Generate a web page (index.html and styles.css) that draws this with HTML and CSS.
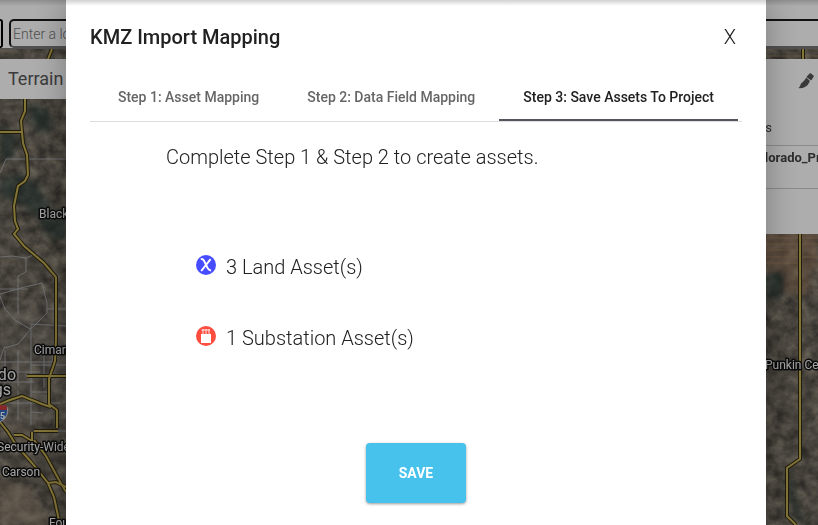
FILE: index.html
```html
<!DOCTYPE html>
<html lang="en">
<head>
    <meta charset="UTF-8">
    <title>KMZ Import Mapping</title>
    <link rel="stylesheet" href="styles.css">
</head>
<body>
    <div class="app">
        <header class="topbar">
            <button class="topbar-btn" aria-label="Menu"></button>
            <input type="text" class="search" placeholder="Enter a location" aria-label="Location">
        </header>

        <main class="map">
            <svg class="map-canvas" viewBox="0 49 818 476" preserveAspectRatio="xMidYMid slice">
                <defs>
                    <filter id="ground" x="0" y="0" width="100%" height="100%" color-interpolation-filters="sRGB">
                        <feTurbulence type="fractalNoise" baseFrequency="0.08 0.09" numOctaves="5" seed="8"/>
                        <feColorMatrix values="0.46 0.12 0 0 0.13  0.43 0.12 0 0 0.12  0.37 0.1 0 0 0.12  0 0 0 0 1"/>
                    </filter>
                    <filter id="soft" x="-30%" y="-30%" width="160%" height="160%">
                        <feGaussianBlur stdDeviation="3"/>
                    </filter>
                </defs>
                <rect y="49" width="818" height="476" filter="url(#ground)"/>

                <!-- forest and fields -->
                <g filter="url(#soft)">
                    <path class="forest" d="M28 102l20 8 6 16-10 8-12-8zM0 178l24-3 16 12 12 24 16 8v22l-20-4-10-20-18-14-20-6z"/>
                    <path class="forest" d="M0 125l16 12-2 20-14 4z"/>
                    <path class="city" d="M0 200l14 8 4 30-18 20zM0 310l70-8v115L0 430z"/>
                    <path class="sand" d="M14 425l18 4-4 24-14-6zM0 480l30 8 20 37H0z"/>
                    <path class="field" d="M760 228h58v42h-58zM786 270h24v24h-24z"/>
                    <path class="forest" d="M765 272h20v26h-20zM790 470l8 40 12 15-14-8-10-30z"/>
                </g>
                <path class="rows" d="M766 238h52M766 244h52M766 250h34M766 257h52M766 263h34M766 49h52M766 56h52"/>

                <g class="street">
                    <path d="M0 173l6-14h60"/>
                    <path d="M0 257l12-1 14 2 12-5M26 258v14l-8 4v38M0 289h28M0 294l25-7 17-4 5 20v10l-12 12-5 4-15-9-10-11-5-13M30 330l-12 14-14 4-4 12M30 324l36 2M47 309h19M31 325v100"/>
                    <path d="M5 350v34M18 350v36M0 362h52M0 372h40M0 382h34M31 392h20M31 412l12 1M0 403h60M18 390v30M44 350v38M53 350v30"/>
                    <path d="M56 431h10M31 365h35"/>
                </g>
                <g class="road-edge">
                    <path d="M52 49l-4 10M25 99v12l-4 10 2 22 4 12 1 20-3 6-7 5-4 20 1 15 3 8-4 5 10 12 20 17 12 14v62l-1 22-6 18v25l8 6v18"/>
                    <path d="M0 132h22M27 376h39M0 404l10-4 12-4 10 4 10 4 9 3"/>
                    <path d="M0 422l8 10 8 13 16 18 16 20 6 14 6 28M34 431h24M32 432v9l-10-6h-8M34 440l12 16 12 22 8 14M48 483l8-1 10 5"/>
                    <path d="M803 49v12l-3 173v225l-13 9v48l9 9"/>
                </g>
                <g class="road">
                    <path d="M52 49l-4 10M25 99v12l-4 10 2 22 4 12 1 20-3 6-7 5-4 20 1 15 3 8-4 5 10 12 20 17 12 14v62l-1 22-6 18v25l8 6v18"/>
                    <path d="M0 132h22M27 376h39M0 404l10-4 12-4 10 4 10 4 9 3"/>
                    <path d="M0 422l8 10 8 13 16 18 16 20 6 14 6 28M34 431h24M32 432v9l-10-6h-8M34 440l12 16 12 22 8 14M48 483l8-1 10 5"/>
                    <path d="M803 49v12l-3 173v225l-13 9v48l9 9"/>
                </g>

                <!-- interstate shield -->
                <path d="M-8 407q7-2 15 0 3 9-7 15-9-5-8-15z" fill="#2f65bd" stroke="#d8d8d8"/>
                <path d="M-7 406q7-2 14 0v4H-7z" fill="#c93a3e"/>
                <text x="0" y="419" class="shield">5</text>

                <g class="place">
                    <text x="39" y="218">Black Forest</text>
                    <text x="34" y="354">Cimarron Hills</text>
                    <text x="-3" y="451">Security-Widefield</text>
                    <text x="2" y="476">Carson</text>
                    <text x="49" y="527">Fountain</text>
                    <text x="765" y="369">Punkin Center</text>
                    <text x="16" y="380" class="city-name">Colorado</text>
                    <text x="11" y="395" class="city-name">Springs</text>
                </g>
            </svg>

            <button class="terrain">Terrain</button>

            <aside class="panel">
                <svg class="brush" viewBox="0 0 16 16" aria-hidden="true">
                    <path d="M12.2 1l2.8 2.2-2 3.2-3.4-2.6z" stroke="#555" stroke-width="1.6" stroke-linejoin="round"/>
                    <path d="M8.3 4.6L12 7.9q-1.6 4.2-5 6-3 1.6-6.6 1.2 1.400-1 1.800-2.600.4-2.600 2.600-3.600 1.600-.7 3.500-4.300z"/>
                </svg>
                <p class="panel-label">Layers</p>
                <p class="panel-row">Colorado_Project</p>
            </aside>
        </main>
    </div>

    <div class="overlay">
        <section class="modal" role="dialog" aria-labelledby="modal-title">
            <header class="modal-header">
                <h1 id="modal-title">KMZ Import Mapping</h1>
                <button class="close" aria-label="Close">X</button>
            </header>

            <div class="tabs" role="tablist">
                <button class="tab" role="tab">Step 1: Asset Mapping</button>
                <button class="tab" role="tab">Step 2: Data Field Mapping</button>
                <button class="tab active" role="tab" aria-selected="true">Step 3: Save Assets To Project</button>
            </div>

            <div class="content">
                <p>Complete Step 1 &amp; Step 2 to create assets.</p>
                <ul class="assets">
                    <li>
                        <svg class="asset-icon" viewBox="0 0 20 20" aria-hidden="true">
                            <circle cx="10" cy="10" r="10" fill="#474cff"/>
                            <path d="M4.8 4q2.2-.2 3 1.400l4 8q.9 1.900 3.300 2M14.600 4.200L5.200 16" fill="none" stroke="#fff" stroke-width="2"/>
                        </svg>
                        <span>3 Land Asset(s)</span>
                    </li>
                    <li>
                        <svg class="asset-icon" viewBox="0 0 20 20" aria-hidden="true">
                            <circle cx="10" cy="10" r="10" fill="#ff4d3f"/>
                            <path d="M5 8h10v9H5z" fill="#fff"/>
                            <path d="M7 3v5M10 3v5M13 3v5M5.500 4h8.500" fill="none" stroke="#fff" stroke-width="1" opacity=".85"/>
                        </svg>
                        <span>1 Substation Asset(s)</span>
                    </li>
                </ul>
            </div>

            <button class="save">SAVE</button>
        </section>
    </div>
</body>
</html>
```

FILE: styles.css
```css
* {
    box-sizing: border-box;
}
body {
    margin: 0;
    font-family: Roboto, Arial, sans-serif;
    color: #212121;
    overflow: hidden;
}
h1, p, ul {
    margin: 0;
    padding: 0;
}
button {
    font-family: inherit;
    border: none;
    background: none;
    cursor: pointer;
}

/* page behind the dialog */
.app {
    display: flex;
    flex-direction: column;
    height: 100vh;
}
.topbar {
    display: grid;
    grid-template-columns: 3px 1fr;
    gap: 6px;
    height: 49px;
    padding-top: 19px;
    background: #ffffff;
    border-bottom: 1px solid #777777;
    overflow: hidden;
}
.topbar-btn {
    height: 29px;
    padding: 0;
    border: 2px solid #000000;
    border-left: none;
    border-radius: 0 5px 5px 0;
}
.search {
    height: 29px;
    margin-right: -10px;
    padding: 0 2px;
    border: 2px solid #1a1a1a;
    border-bottom-color: #777777;
    border-radius: 5px;
    font-family: inherit;
    font-size: 14px;
    font-weight: 300;
}
.search::placeholder {
    color: #757575;
}
.map {
    position: relative;
    flex: 1;
    overflow: hidden;
}
.map-canvas {
    display: block;
    width: 100%;
    height: 100%;
}
.forest {
    fill: #263a35;
    opacity: 0.6;
}
.city {
    fill: #8b8781;
    opacity: 0.2;
}
.sand {
    fill: #a89680;
    opacity: 0.4;
}
.field {
    fill: #a27c5b;
    opacity: 0.5;
}
.rows {
    stroke: #b48e68;
    stroke-width: 2;
    opacity: 0.25;
}
.street {
    fill: none;
    stroke: #b5bac0;
    stroke-width: 1;
    opacity: 0.7;
}
.road-edge {
    fill: none;
    stroke: #2e2a12;
    stroke-width: 4;
}
.road {
    fill: none;
    stroke: #c2ab52;
    stroke-width: 2;
}
.place {
    font-size: 12px;
    fill: #f2f2f2;
    stroke: #111111;
    stroke-width: 3px;
    stroke-linejoin: round;
    paint-order: stroke;
}
.city-name {
    font-size: 16px;
    text-anchor: end;
}
.shield {
    font-size: 9px;
    font-weight: 700;
    fill: #ffffff;
}
.terrain {
    position: absolute;
    top: 10px;
    left: 0;
    height: 40px;
    padding: 0 8px 2px;
    background: #ffffff;
    color: #565656;
    font-size: 18px;
}
.panel {
    position: absolute;
    top: 10px;
    right: -50px;
    width: 144px;
    height: 175px;
    padding-top: 14px;
    background: #ffffff;
    color: #444444;
    font-size: 13px;
    line-height: 18px;
}
.brush {
    display: block;
    width: 16px;
    height: 16px;
    margin: 0 54px 30px auto;
    fill: #555555;
}
.panel-label {
    padding: 0 10px 8px;
}
.panel-row {
    height: 44px;
    padding: 3px 25px;
    border-top: 1px solid #cccccc;
    border-bottom: 1px solid #cccccc;
    font-weight: 700;
}

/* dialog */
.overlay {
    position: fixed;
    inset: 0;
    display: flex;
    justify-content: center;
    padding: 0 52px 0 66px;
    background: rgba(0, 0, 0, 0.32);
}
.overlay::after {
    content: "";
    position: absolute;
    inset: 0 0 auto;
    height: 6px;
    background: linear-gradient(rgba(0, 0, 0, 0.18), rgba(0, 0, 0, 0));
}
.modal {
    width: 100%;
    max-width: 700px;
    padding: 24px 24px 0;
    background: #ffffff;
    box-shadow: 0 0 32px rgba(0, 0, 0, 0.3);
}
.modal-header {
    display: flex;
    justify-content: space-between;
    align-items: center;
    height: 26px;
    margin-bottom: 23px;
}
.modal-header h1 {
    font-size: 20px;
    font-weight: 500;
}
.close {
    padding: 0 6px;
    color: #212121;
    font-size: 20px;
    font-weight: 300;
}
.tabs {
    display: flex;
    justify-content: center;
    border-bottom: 1px solid #dedede;
}
.tab {
    height: 48px;
    padding: 2px 24px 0;
    border-bottom: 2px solid transparent;
    color: #666666;
    font-size: 14px;
    font-weight: 500;
    white-space: nowrap;
}
.tab.active {
    border-color: #55555d;
    color: #212121;
}
.content {
    padding: 23px 76px 0;
    font-size: 20px;
    font-weight: 300;
    line-height: 24px;
}
.assets {
    display: grid;
    gap: 47px;
    padding: 86px 30px 0;
    list-style: none;
}
.assets li {
    display: flex;
    gap: 10px;
}
.asset-icon {
    width: 20px;
    height: 20px;
}
.save {
    display: block;
    width: 100px;
    height: 60px;
    margin: 93px auto 0;
    background: #47c2ed;
    color: #ffffff;
    border-radius: 4px;
    box-shadow: 0 1px 3px rgba(0, 0, 0, 0.4);
    font-size: 14px;
    font-weight: 700;
}
```
